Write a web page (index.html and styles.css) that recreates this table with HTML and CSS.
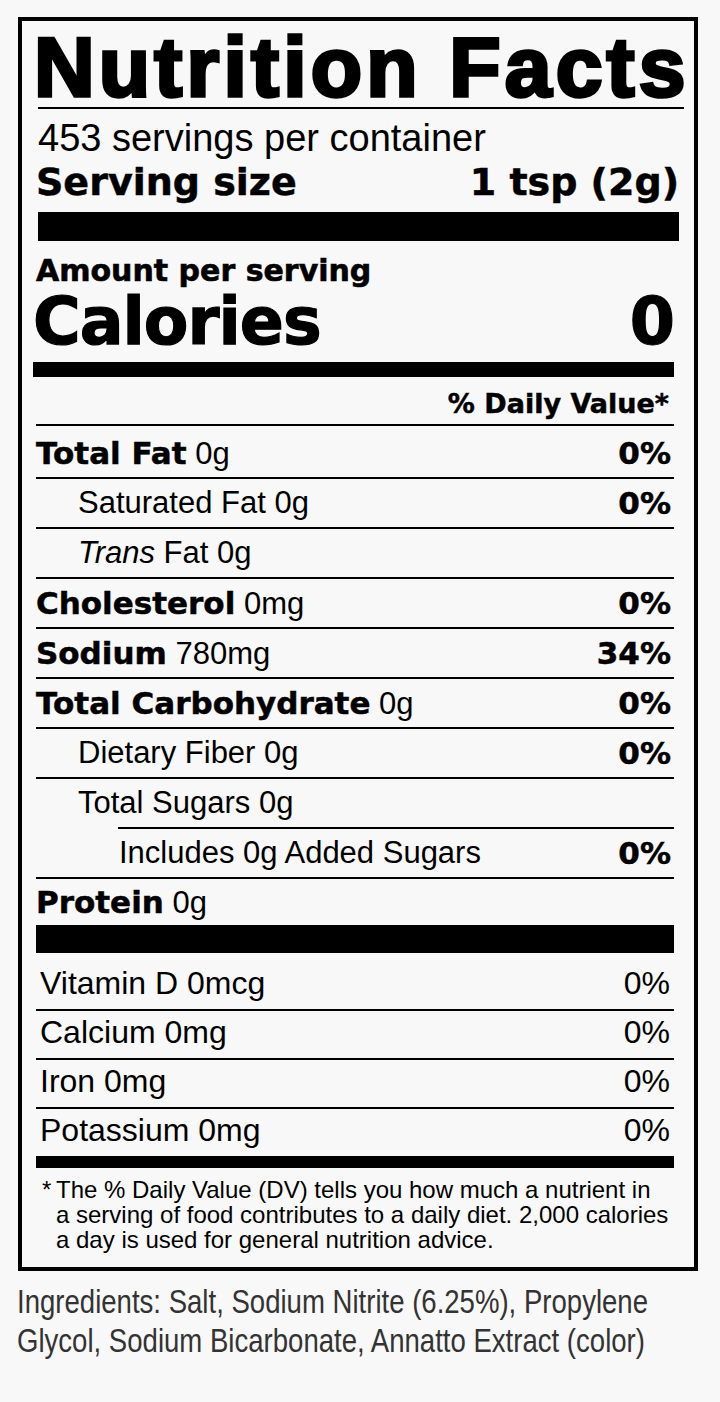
FILE: index.html
```html
<!DOCTYPE html>
<html lang="en">
<head>
<meta charset="utf-8">
<title>Nutrition Facts</title>
<link rel="stylesheet" href="styles.css">
</head>
<body>
<div class="label">
  <div class="head">
    <h1 class="title">Nutrition Facts</h1>
    <p class="servings">453 servings per container</p>
    <div class="serving-size"><span>Serving size</span><span>1 tsp (2g)</span></div>
  </div>
  <div class="bar bar-top"></div>
  <div class="cal-block">
    <p class="amount">Amount per serving</p>
    <div class="calories"><span>Calories</span><span>0</span></div>
  </div>
  <div class="bar bar-cal"></div>
  <div class="dv-head">% Daily Value*</div>
  <div class="row row-first"><span><b>Total Fat</b> 0g</span><b>0%</b></div>
  <div class="row sub"><span>Saturated Fat 0g</span><b>0%</b></div>
  <div class="row sub"><span><i>Trans</i> Fat 0g</span></div>
  <div class="row"><span><b>Cholesterol</b> 0mg</span><b>0%</b></div>
  <div class="row"><span><b>Sodium</b> 780mg</span><b>34%</b></div>
  <div class="row"><span><b>Total Carbohydrate</b> 0g</span><b>0%</b></div>
  <div class="row sub"><span>Dietary Fiber 0g</span><b>0%</b></div>
  <div class="row sub no-line"><span>Total Sugars 0g</span></div>
  <div class="subline"></div>
  <div class="row subsub"><span>Includes 0g Added Sugars</span><b>0%</b></div>
  <div class="row no-line protein"><span><b>Protein</b> 0g</span></div>
  <div class="bar bar-mid"></div>
  <div class="vit vit-first"><span>Vitamin D 0mcg</span><span>0%</span></div>
  <div class="vit"><span>Calcium 0mg</span><span>0%</span></div>
  <div class="vit"><span>Iron 0mg</span><span>0%</span></div>
  <div class="vit no-line"><span>Potassium 0mg</span><span>0%</span></div>
  <div class="bar bar-bottom"></div>
  <div class="foot"><span class="star">*</span><p>The % Daily Value (DV) tells you how much a nutrient in<br>a serving of food contributes to a daily diet. 2,000 calories<br>a day is used for general nutrition advice.</p></div>
</div>
<div class="ingredients-wrap">
  <p class="ingredients">Ingredients: Salt, Sodium Nitrite (6.25%), Propylene Glycol, Sodium Bicarbonate, Annatto Extract (color)</p>
</div>
</body>
</html>
```
FILE: styles.css
```css
* { box-sizing: border-box; }
html, body { margin: 0; padding: 0; }
body {
  background: #f8f8f8;
  color: #000;
  font-family: "Liberation Sans", Arial, sans-serif;
  width: 720px;
  height: 1402px;
  overflow: hidden;
}
p, h1 { margin: 0; }
b {
  font-family: "DejaVu Sans", sans-serif;
  font-weight: 700;
  -webkit-text-stroke: 0.5px #000;
}

.label {
  margin: 17px 0 0 18px;
  width: 680px;
  border: 4px solid #000;
  padding: 0 20px 0 14px;
}

.head { margin: 0 -10px 0 2px; }
.title {
  font-family: "Liberation Sans", Arial, sans-serif;
  font-weight: 700;
  font-size: 84px;
  line-height: 79px;
  padding-top: 7px;
  letter-spacing: 4.2px;
  -webkit-text-stroke: 3.5px #000;
  border-bottom: 2px solid #000;
  white-space: nowrap;
  text-indent: -4px;
}
.servings {
  font-size: 38px;
  line-height: 38px;
  padding-top: 10px;
}
.serving-size {
  display: flex;
  justify-content: space-between;
  font-family: "DejaVu Sans", sans-serif;
  font-weight: 700;
  font-size: 38px;
  line-height: 40px;
  padding: 5px 5px 0 0;
  margin-left: -2px;
  -webkit-text-stroke: 0.5px #000;
}

.bar { background: #000; }
.bar-top { height: 29px; margin: 10px -5px 0 2px; }
.cal-block {
  margin-left: -3px;
  font-family: "DejaVu Sans", sans-serif;
  font-weight: 700;
  -webkit-text-stroke: 0.6px #000;
}
.amount {
  font-size: 30px;
  line-height: 30px;
  margin-top: 15px;
  padding-left: 3px;
}
.calories {
  display: flex;
  justify-content: space-between;
  font-size: 65px;
  line-height: 60px;
  letter-spacing: -1px;
  margin-top: 6px;
  -webkit-text-stroke: 1.2px #000;
}
.bar-cal { height: 15px; margin: 10px 0 0 -3px; }

.dv-head {
  font-family: "DejaVu Sans", sans-serif;
  font-weight: 700;
  font-size: 27px;
  line-height: 27px;
  text-align: right;
  padding: 13px 5px 7px 0;
  border-bottom: 2px solid #000;
  -webkit-text-stroke: 0.5px #000;
}

.row {
  display: flex;
  justify-content: space-between;
  font-size: 31px;
  line-height: 48px;
  height: 50px;
  padding-right: 3px;
  border-bottom: 2px solid #000;
  white-space: nowrap;
}
.row-first { height: 53px; padding-top: 3px; }
.row.sub { padding-left: 42px; }
.row.no-line { border-bottom: 0; height: 48px; }
.subline { height: 2px; background: #000; margin-left: 82px; }
.row.subsub { padding-left: 83px; }
.row.protein { line-height: 46px; height: 46px; }
.row b { font-size: 31px; }

.bar-mid { height: 28px; }

.vit {
  display: flex;
  justify-content: space-between;
  font-size: 32px;
  line-height: 42px;
  height: 49px;
  padding: 0 4px 5px 4px;
  border-bottom: 2px solid #000;
}
.vit-first { height: 58px; padding-top: 9px; }
.vit.no-line { border-bottom: 0; height: 47px; }

.bar-bottom { height: 12px; }

.foot {
  display: flex;
  font-size: 24px;
  line-height: 25px;
  padding: 9px 0 15px 6px;
}
.star { width: 14px; flex: none; }
.foot p { white-space: nowrap; }

.ingredients-wrap {
  margin: 11px 0 0 17px;
  height: 80px;
}
.ingredients {
  font-size: 33px;
  line-height: 39px;
  color: #333;
  width: 770px;
  transform: scaleX(0.835);
  transform-origin: 0 0;
}
```
